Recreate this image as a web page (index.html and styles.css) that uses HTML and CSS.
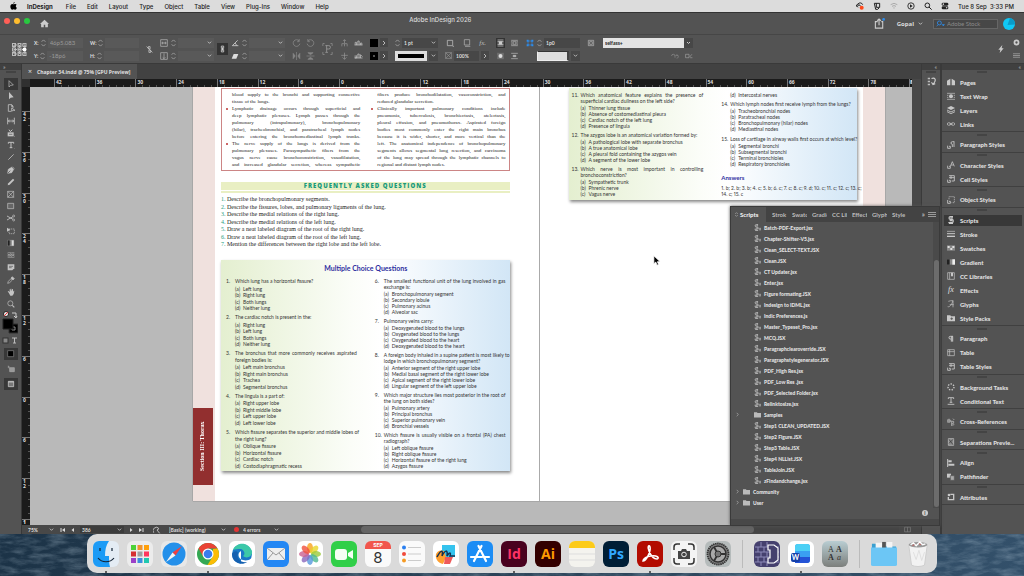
FILE: index.html
```html
<!DOCTYPE html>
<html lang="en">
<head>
  <meta charset="UTF-8">
  <meta name="viewport" content="width=device-width, initial-scale=1.0">
  <title>Adobe InDesign 2026</title>
  <link rel="stylesheet" href="styles.css">
</head>
<body>
  <!-- icon sprite -->
  <svg class="sprite" aria-hidden="true">
    <symbol id="script" viewBox="0 0 12 12"><path d="M7 1H4a2 2 0 0 0 0 4h1a2 2 0 0 1 0 4H1M4 3h3M3 7h3M2 11h5" fill="none" stroke="currentColor" stroke-width="1.6"/><path d="M8 7h1v4M10 7h1v4" fill="none" stroke="currentColor" stroke-width="1.2"/></symbol>
    <symbol id="folder" viewBox="0 0 12 12"><path d="M0 2h5l1 1.500h6V11H0z" fill="currentColor"/></symbol>
    <symbol id="chev" viewBox="0 0 12 12"><path d="M4 2l4 4-4 4" fill="none" stroke="currentColor" stroke-width="1.500"/></symbol>
    <symbol id="down" viewBox="0 0 12 12"><path d="M2 4l4 4 4-4" fill="none" stroke="currentColor" stroke-width="1.800"/></symbol>
    <symbol id="step" viewBox="0 0 8 12"><path d="M1 4l3-3 3 3M1 8l3 3 3-3" fill="none" stroke="currentColor" stroke-width="1.300"/></symbol>
    <symbol id="pstyle" viewBox="0 0 12 12"><path d="M11 1H8a2 2 0 0 0 0 4v4M10.500 1v8" fill="none" stroke="currentColor" stroke-width="1.300"/><path d="M1 7v4h4V8H3" fill="none" stroke="currentColor" stroke-width="1.300"/></symbol>
    <symbol id="cellstyle" viewBox="0 0 12 12"><path d="M3 1h8v8H7M3 4h8M6 1v5M1 7v4h4V8H3" fill="none" stroke="currentColor" stroke-width="1.300"/></symbol>
  </svg>

  <header class="menubar">
    <svg class="apple" viewBox="0 0 12 14"><path d="M8 0c0 2-1 3-2.500 3C5.500 1.500 6.500.5 8 0zM6 4c1 0 1.500-.7 3-.7 1 0 2 .6 2.500 1.400-2.200 1.300-1.800 4.300.4 5.200-.6 1.700-1.800 3.600-3 3.600-1 0-1.400-.6-2.600-.6s-1.700.6-2.600.6C2.200 13.500.5 10.500.5 7.700c0-2.800 1.700-4.300 3.300-4.300.9 0 1.500.6 2.200.6z"/></svg>
    <nav class="menus">
      <a href="#" class="appname">InDesign</a><a href="#">File</a><a href="#">Edit</a><a href="#">Layout</a><a href="#">Type</a><a href="#">Object</a><a href="#">Table</a><a href="#">View</a><a href="#">Plug-Ins</a><a href="#">Window</a><a href="#">Help</a>
    </nav>
    <div class="tray">
      <svg viewBox="0 0 12 12"><path d="M1 7a3 3 0 0 1 2-4 4 4 0 0 1 7 1M3 8a2 2 0 1 1 3-3l2 2" fill="none" stroke="#222" stroke-width="1.500"/><circle cx="8.500" cy="8.500" r="3" fill="#ff4a1c"/></svg>
      <svg viewBox="0 0 12 12"><path d="M2 2h8v6L7 11H4zM5 2v6h4" fill="none" stroke="#222" stroke-width="1.500"/></svg>
      <svg viewBox="0 0 12 12"><path d="M1 4a8 8 0 0 1 10 0M3 6.500a5 5 0 0 1 6 0M5 9a2 2 0 0 1 2 0" fill="none" stroke="#aaa" stroke-width="1.500"/></svg>
      <svg viewBox="0 0 12 12"><circle cx="6" cy="6" r="4.800" fill="none" stroke="#222" stroke-width="1.300"/><path d="M4.500 3.500L8.500 6l-4 2.500z" fill="#222"/></svg>
      <svg viewBox="0 0 12 12"><circle cx="5" cy="5" r="3.500" fill="none" stroke="#222" stroke-width="1.500"/><path d="M7.500 7.500l4 4" stroke="#222" stroke-width="1.500"/></svg>
      <svg viewBox="0 0 12 12"><rect x="1" y="1" width="10" height="4.500" rx="2" fill="#222"/><circle cx="3.500" cy="3.200" r="1.200" fill="#ddd"/><rect x="1" y="6.500" width="10" height="4.500" rx="2" fill="#222"/><circle cx="8.500" cy="8.700" r="1.200" fill="#ddd"/></svg>
      <time>Tue 8 Sep&nbsp; 3:33 PM</time>
    </div>
  </header>

  <main class="app">
    <div class="titlebar">
      <div class="lights"><i></i><i></i><i></i></div>
      <svg class="home" viewBox="0 0 12 12"><path d="M6 1L0 6.500h1.500V11H5V7.500h2V11h3.500V6.500H12z" fill="#ccc"/></svg>
      <h1>Adobe InDesign 2026</h1>
      <div class="account">
        <svg class="share" viewBox="0 0 12 12"><path d="M4 4H1.500v7h8V4H8M5.500 8V1M3.500 3l2-2 2 2" fill="none" stroke="#ccc" stroke-width="1.200"/><circle cx="10.500" cy="1.500" r="1.500" fill="#2d8ceb"/></svg>
        <button class="user">Gopal <svg viewBox="0 0 12 12"><use href="#down"/></svg></button>
        <label class="stock"><svg viewBox="0 0 16 12"><circle cx="6" cy="5" r="3.500" fill="none" stroke="#2d8ceb" stroke-width="1.500"/><path d="M4 8l-3 3M11 8h4l-2 2z" stroke="#2d8ceb" stroke-width="1.300" fill="#2d8ceb"/></svg><input type="text" placeholder="Adobe Stock" aria-label="Adobe Stock"></label>
        <svg class="avatar" viewBox="0 0 12 12"><circle cx="6" cy="6" r="6" fill="#10c8f5"/><path d="M7 0a6 6 0 0 1 5 6.500L4.500 7z" fill="#0b9bc8"/></svg>
      </div>
    </div>

    <div class="control">
      <svg class="proxy" viewBox="0 0 15 13"><g fill="none" stroke="#bbb" stroke-width="1"><path d="M2 2h11M2 6.500h11M2 11h11M2 2v9M7.500 2v9M13 2v9" stroke-dasharray="1 1"/><rect x=".5" y=".5" width="3" height="3"/><rect x="6" y=".5" width="3" height="3"/><rect x="11" y=".5" width="3" height="3"/><rect x=".5" y="5" width="3" height="3"/><rect x="6" y="5" width="3" height="3"/><rect x=".5" y="9.500" width="3" height="3"/><rect x="6" y="9.500" width="3" height="3"/><rect x="11" y="9.500" width="3" height="3"/></g><circle cx="12.500" cy="6.500" r="2" fill="#fff"/></svg>
      <div class="pair w49">
        <label class="field dim">X:<svg viewBox="0 0 8 12"><use href="#step"/></svg><input type="text" value="46p5.083"></label>
        <label class="field dim">Y:<svg viewBox="0 0 8 12"><use href="#step"/></svg><input type="text" value="-18p6"></label>
      </div>
      <div class="pair w49">
        <label class="field dim">W:<svg viewBox="0 0 8 12"><use href="#step"/></svg><input type="text"></label>
        <label class="field dim">H:<svg viewBox="0 0 8 12"><use href="#step"/></svg><input type="text"></label>
      </div>
      <svg class="ic7" viewBox="0 0 12 12"><path d="M4 1h3v4H4zM5 7h3v4H5zM1 1l10 10" fill="none" stroke="#bbb" stroke-width="1.500"/></svg>
      <div class="cluster">
        <div class="pair w54">
          <label class="field"><svg class="lead" viewBox="0 0 12 12"><path d="M1 1h10v10H1zM2 6h8M4 4v4M8 4v4" fill="none" stroke="#bbb"/></svg><svg viewBox="0 0 8 12"><use href="#step"/></svg><select aria-label="Scale X"><option></option></select></label>
          <label class="field"><svg class="lead" viewBox="0 0 12 12"><path d="M1 1h10v10H1zM6 2v8M4 8l2 2 2-2" fill="none" stroke="#bbb"/></svg><svg viewBox="0 0 8 12"><use href="#step"/></svg><select aria-label="Scale Y"><option></option></select></label>
        </div>
        <button class="lock" aria-label="Constrain"><svg viewBox="0 0 12 12"><path d="M4 1h4v4H4zM4 7h4v4H4zM6 3v6" fill="none" stroke="#ddd" stroke-width="1.300"/></svg></button>
        <div class="pair w54">
          <label class="field"><svg class="lead" viewBox="0 0 12 12"><path d="M10 2L2 10h9M6 6a5 5 0 0 1 2 4" fill="none" stroke="#ccc" stroke-width="1.300"/></svg><svg viewBox="0 0 8 12"><use href="#step"/></svg><select aria-label="Rotation"><option></option></select></label>
          <label class="field"><svg class="lead" viewBox="0 0 12 12"><path d="M4 3h7l-3 7H1z" fill="#ddd"/></svg><svg viewBox="0 0 8 12"><use href="#step"/></svg><select aria-label="Shear"><option></option></select></label>
        </div>
      </div>
      <div class="quad faint">
        <svg viewBox="0 0 12 12"><path d="M10 3a5 5 0 1 0 1 4M10 0v4H7" fill="none" stroke="currentColor" stroke-width="1.200"/></svg>
        <svg viewBox="0 0 12 12"><path d="M2 3a5 5 0 1 1-1 4M2 0v4h3" fill="none" stroke="currentColor" stroke-width="1.200"/></svg>
        <svg viewBox="0 0 12 12"><path d="M1 2v8l3-4zM11 2v8L8 6zM6 0v12" fill="currentColor" stroke="currentColor"/></svg>
        <svg viewBox="0 0 12 12"><path d="M2 1h8L6 4zM2 11h8L6 8zM0 6h12" fill="currentColor" stroke="currentColor"/></svg>
      </div>
      <svg class="pbox" viewBox="0 0 13 15"><path d="M1 4V1h2M10 1h2v3M1 11v3h2M10 14h2v-3" fill="none" stroke="#888"/><path d="M4 11.500h3M5.500 11V3.500H8a2 2 0 0 1 0 4H5.500M4 3.500h2" fill="none" stroke="#999"/></svg>
      <div class="quad faint">
        <svg viewBox="0 0 12 12"><path d="M6 1v5M2 7h8M2 7v4M6 7v4M10 7v4M4 3l2-2 2 2" fill="none" stroke="#999"/></svg>
        <svg viewBox="0 0 12 12"><path d="M1 9V5h2v4M5 9V3h2v6M9 9V6h2v3M0 9h12" fill="none" stroke="#ccc"/></svg>
        <svg viewBox="0 0 12 12"><path d="M6 1v10M1 5h10M3 8l3 3 3-3" fill="none" stroke="#999"/></svg>
        <svg viewBox="0 0 12 12"><path d="M1 5v4h2V5M5 9V3h2v6M9 9V4l3 3M0 9h12" fill="none" stroke="#ccc"/></svg>
      </div>
      <div class="pair w18">
        <div class="row"><span class="swatch"></span><button class="mini" aria-label="Fill"><svg viewBox="0 0 12 12"><use href="#chev"/></svg></button></div>
        <div class="row"><span class="swatch dot"></span><button class="mini" aria-label="Stroke"><svg viewBox="0 0 12 12"><use href="#chev"/></svg></button></div>
      </div>
      <div class="pair w43">
        <label class="field box"><svg viewBox="0 0 8 12"><use href="#step"/></svg><select aria-label="Stroke weight"><option>1 pt</option></select></label>
        <label class="field box"><span class="line"></span><select class="only" aria-label="Stroke style"><option></option></select></label>
      </div>
      <div class="pair w44">
        <div class="row spread3">
          <svg class="ic8" viewBox="0 0 12 12"><path d="M2 2h8v8H2z" fill="none" stroke="#bbb" stroke-width="1.200"/><path d="M10 11h2" stroke="#ccc"/></svg>
          <svg class="ic8" viewBox="0 0 12 12"><path d="M2 1h8v8H2zM3 11h8" fill="none" stroke="#aaa" stroke-width="1.200"/></svg>
          <em>fx.</em>
        </div>
        <div class="row"><svg class="ic7" viewBox="0 0 12 12"><path d="M1 1h10v10H1zM1 1l10 10M11 1L1 11" fill="none" stroke="#999"/></svg><input class="pct" type="text" value="100%" aria-label="Opacity"><button class="mini" aria-label="Opacity menu"><svg viewBox="0 0 12 12"><use href="#chev"/></svg></button></div>
      </div>
      <div class="quad wrapset">
        <svg class="on" viewBox="0 0 12 12"><path d="M2 2h8M2 4h8M2 6h8M2 8h8M2 10h8" stroke="#ccc"/><path d="M4 4h4v4H4z" fill="#ccc"/></svg>
        <svg viewBox="0 0 12 12"><path d="M1 2h10M1 10h10M1 4h2M1 6h2M1 8h2M9 4h2M9 6h2M9 8h2M4 4h4v4H4z" stroke="#bbb" fill="none"/></svg>
        <svg viewBox="0 0 12 12"><path d="M1 2h10M1 4h10M1 6h10M1 8h10M1 10h10" stroke="#888"/><circle cx="6" cy="6" r="3" fill="#ddd"/></svg>
        <svg viewBox="0 0 12 12"><path d="M1 2h10M1 10h10M4 5h4v2H4z" stroke="#bbb" fill="#bbb"/></svg>
      </div>
      <div class="pair w54">
        <label class="field box"><svg class="lead" viewBox="0 0 12 12"><path d="M3 3h6v6H3z" fill="none" stroke="#2d8ceb"/><path d="M1 1h3v3H1zM8 1h3v3H8zM1 8h3v3H1zM8 8h3v3H8z" fill="#2d8ceb"/></svg><svg viewBox="0 0 8 12"><use href="#step"/></svg><input type="text" value="1p0" aria-label="Corner size"></label>
        <label class="field box indent"><span class="corner"></span><select class="only" aria-label="Corner shape"><option></option></select></label>
      </div>
      <div class="pair w106">
        <label class="field box"><svg class="ic8" viewBox="0 0 12 12"><path d="M2 2h8v8H2zM4 4h4v4H4z" fill="none" stroke="#bbb"/></svg><select class="style" aria-label="Object style"><option>selfass+</option></select></label>
        <div class="row end"><svg class="ic8" viewBox="0 0 14 12"><path d="M1 6a3 3 0 0 1 6 0v3M8 5h4l-2-2M12 5c2 2 0 5-2 5" fill="none" stroke="#999"/></svg><svg class="ic8" viewBox="0 0 14 12"><path d="M1 3h6v6H1zM8 8l4-5M9 9h4" fill="none" stroke="#aaa"/></svg></div>
      </div>
      <div class="ctlend">
        <svg class="ic8" viewBox="0 0 12 12"><path d="M8 0L2 7h3l-1 5 6-7H7z" fill="#ccc"/></svg>
        <div class="pair">
          <svg class="ic7" viewBox="0 0 12 12"><circle cx="6" cy="6" r="3.500" fill="none" stroke="#ccc" stroke-width="3" /></svg>
          <svg class="ic7" viewBox="0 0 12 12"><path d="M0 3h12M0 6h12M0 9h12" stroke="#bbb"/></svg>
        </div>
      </div>
    </div>

    <div class="work">
      <aside class="tools">
        <div class="dockhead left">»</div>
        <div class="grip"></div>
        <div class="toolset">
          <button class="on" aria-label="Selection"><svg viewBox="0 0 12 12"><path d="M3 1v9.500L5.500 8 9.500 7.500z" fill="none" stroke="currentColor"/></svg></button>
          <button aria-label="Direct Selection"><svg viewBox="0 0 12 12"><path d="M3 0v11L5.500 8.500 10 8z" fill="currentColor"/></svg></button>
          <button aria-label="Page"><svg viewBox="0 0 12 12"><path d="M2 1h5l2 2v3M2 1v10h4M7 1v3h2M7 6v5l2-1.500h3z" fill="none" stroke="currentColor" stroke-width="1.200"/></svg></button>
          <button aria-label="Gap"><svg viewBox="0 0 12 12"><path d="M1 1v10M11 1v10M2 6h8M4 4L2 6l2 2M8 4l2 2-2 2" fill="none" stroke="currentColor" stroke-width="1.300"/></svg></button>
          <button aria-label="Content Collector"><svg viewBox="0 0 12 12"><path d="M1 5v6h9V5z" fill="currentColor"/><path d="M3 1l2 3 3-3" fill="none" stroke="currentColor" stroke-width="1.500"/><path d="M3 8h5" stroke="#555"/><path d="M11 11h1" stroke="currentColor"/></svg></button>
          <button aria-label="Type"><svg viewBox="0 0 12 12"><path d="M2 4V2h8v2M6 2v8M4 10h4" fill="none" stroke="currentColor" stroke-width="1.500"/><path d="M11 12h1" stroke="currentColor"/></svg></button>
          <button aria-label="Line"><svg viewBox="0 0 12 12"><path d="M2 10l8-8" stroke="currentColor" stroke-width="1.200"/></svg></button>
          <button aria-label="Pen"><svg viewBox="0 0 12 12"><path d="M1 11l1-6 5-3 3 3-3 5zM8 1l3 3" fill="currentColor" stroke="currentColor"/><path d="M1 11l4-4" stroke="#444"/></svg></button>
          <button aria-label="Pencil"><svg viewBox="0 0 12 12"><path d="M1 11l1-3 7-7 2 2-7 7z" fill="currentColor"/></svg></button>
          <button aria-label="Rectangle Frame"><svg viewBox="0 0 12 12"><path d="M1 2h9v9H1zM1 2l9 9M10 2l-9 9" fill="none" stroke="currentColor"/></svg></button>
          <button aria-label="Rectangle"><svg viewBox="0 0 12 12"><path d="M1 2h9v8H1z" fill="#666" stroke="currentColor"/></svg></button>
          <button aria-label="Scissors"><svg viewBox="0 0 12 12"><path d="M0 3l9 5M0 9l9-5" stroke="currentColor" stroke-width="1.300"/><circle cx="10" cy="3" r="1.500" fill="none" stroke="currentColor"/><circle cx="10" cy="9" r="1.500" fill="none" stroke="currentColor"/></svg></button>
          <button aria-label="Free Transform"><svg viewBox="0 0 12 12"><path d="M0 1v6l5-3z" fill="currentColor"/><path d="M3 3h8v7H3z" fill="none" stroke="currentColor" stroke-dasharray="2 1"/></svg></button>
          <button aria-label="Gradient Swatch"><svg viewBox="0 0 12 12"><path d="M1 2h9v8H1z" fill="#777" stroke="#999"/><path d="M1 2h3v8H1z" fill="#222"/><path d="M7 2h3v8H7z" fill="#ddd"/></svg></button>
          <button aria-label="Gradient Feather"><svg viewBox="0 0 12 12"><path d="M1 2h10v8H1z" fill="#999"/><path d="M1 5l2-2 2 2 2-2 2 2 2-2M1 9l2-2 2 2 2-2 2 2 2-2" fill="none" stroke="#444"/></svg></button>
          <button aria-label="Note"><svg viewBox="0 0 12 12"><path d="M1 2h10v6l-3 3H1z" fill="currentColor"/><path d="M3 5h6M3 7h4" stroke="#555"/></svg></button>
          <button aria-label="Eyedropper"><svg viewBox="0 0 12 12"><path d="M1 11l1-3 4-4 2 2-4 4z" fill="none" stroke="currentColor"/><path d="M6 3l2-2 3 3-2 2z" fill="currentColor" stroke="currentColor"/></svg></button>
          <button aria-label="Hand"><svg viewBox="0 0 12 12"><path d="M3 8L1 5l1-.5L4 6V2h1v3l.5-4h1V5L8 1.500h1V6l1-2h1L10 9l-2 2.500H5z" fill="currentColor"/></svg></button>
          <button aria-label="Zoom"><svg viewBox="0 0 12 12"><circle cx="5" cy="5" r="3.800" fill="none" stroke="currentColor"/><path d="M8 8l3 3" stroke="currentColor" stroke-width="1.600"/></svg></button>
        </div>
        <svg class="fillstroke" viewBox="0 0 16 36">
          <circle cx="4" cy="4" r="2.500" fill="#eee" stroke="#222"/><path d="M2 6l4-4" stroke="#d33"/><path d="M10 3h4v4M12 6l2 2 1-2" fill="none" stroke="#ccc"/>
          <path d="M7 14h9v9H7z" fill="#000" stroke="#333"/><path d="M10 17h3v3h-3z" fill="none" stroke="#888"/><path d="M1 9h10v10H1z" fill="#000" stroke="#222"/>
          <rect x="1" y="28" width="5" height="5" fill="#888" stroke="#333"/><path d="M10 28h5M12.500 28v5M11 33h3" stroke="#bbb"/>
        </svg>
        <div class="toolset last">
          <button class="on" aria-label="Apply Color"><svg viewBox="0 0 12 12"><path d="M1 1h9v9H1z" fill="#000" stroke="#888"/></svg></button>
          <button aria-label="View Options"><svg viewBox="0 0 12 12"><path d="M4 4h7v6H4zM1 3h3M2 1l1 4" fill="#999" stroke="#aaa"/></svg></button>
          <button class="on" aria-label="Screen Mode"><svg viewBox="0 0 12 12"><path d="M2 2h8v8H2z" fill="#777" stroke="#ddd"/><path d="M2 3h8" stroke="#ddd"/></svg></button>
        </div>
      </aside>

      <section class="doc">
        <div class="tabs"><div class="tab"><button aria-label="Close">×</button>Chapter 34.indd @ 75% [GPU Preview]</div></div>
        <div class="hruler">
          <div class="lead"></div>
          <span>42</span><span>36</span><span>30</span><span>24</span><span>18</span><span>12</span><span>6</span><span>0</span><span>6</span><span>12</span><span>18</span><span>24</span><span>30</span><span>36</span><span>42</span><span>48</span><span>54</span><span>60</span><span>66</span><span>72</span><span>78</span><b>8</b>
        </div>
        <div class="body">
          <div class="vruler">
            <div class="lead"></div>
            <span>42</span><span>36</span><span>30</span><span>24</span><span>18</span><span>12</span><span>6</span><span>0</span><span>6</span><span>12</span><b>1</b>
          </div>
          <div class="canvas">
            <div class="spread">
              <article class="page">
                <div class="edge"><div class="section">Section III: Thorax</div></div>
                <div class="content">
                  <div class="summary">
                    <div>
                      <p><span class="j">blood supply to the bronchi and supporting connective</span>tissue of the lungs.</p>
                      <p class="bul"><span class="j">Lymphatic drainage occurs through superficial and</span><span class="j">deep lymphatic plexuses. Lymph passes through the</span><span class="j">pulmonary (intrapulmonary), bronchopulmonary</span><span class="j">(hilar), tracheobronchial, and paratracheal lymph nodes</span><span class="j">before entering the bronchomediastinal lymph trunks.</span></p>
                      <p class="bul"><span class="j">The nerve supply of the lungs is derived from the</span><span class="j">pulmonary plexuses. Parasympathetic fibers from the</span><span class="j">vagus nerve cause bronchoconstriction, vasodilatation,</span><span class="j">and increased glandular secretion, whereas sympathetic</span></p>
                    </div>
                    <div>
                      <p><span class="j">fibers produce bronchodilatation, vasoconstriction, and</span>reduced glandular secretion.</p>
                      <p class="bul"><span class="j">Clinically important pulmonary conditions include</span><span class="j">pneumonia, tuberculosis, bronchiectasis, atelectasis,</span><span class="j">pleural effusion, and pneumothorax. Aspirated foreign</span><span class="j">bodies most commonly enter the right main bronchus</span><span class="j">because it is wider, shorter, and more vertical than the</span><span class="j">left. The anatomical independence of bronchopulmonary</span><span class="j">segments allows segmental lung resection, and carcinoma</span><span class="j">of the lung may spread through the lymphatic channels to</span>regional and distant lymph nodes.</p>
                    </div>
                  </div>
                  <h2 class="faqhead">FREQUENTLY ASKED QUESTIONS</h2>
                  <div class="faq">
                    <p><b>1.</b> Describe the bronchopulmonary segments.</p>
                    <p><b>2.</b> Describe the fissures, lobes, and pulmonary ligaments of the lung.</p>
                    <p><b>3.</b> Describe the medial relations of the right lung.</p>
                    <p><b>4.</b> Describe the medial relations of the left lung.</p>
                    <p><b>5.</b> Draw a neat labeled diagram of the root of the right lung.</p>
                    <p><b>6.</b> Draw a neat labeled diagram of the root of the left lung.</p>
                    <p><b>7.</b> Mention the differences between the right lobe and the left lobe.</p>
                  </div>
                  <section class="mcq">
                    <h2>Multiple Choice Questions</h2>
                    <div class="cols">
                      <div class="col loose">
                        <div class="q"><b>1.</b><div><p>Which lung has a horizontal fissure?</p><ul><li><i>(a)</i>Left lung</li><li><i>(b)</i>Right lung</li><li><i>(c)</i>Both lungs</li><li><i>(d)</i>Neither lung</li></ul></div></div>
                        <div class="q"><b>2.</b><div><p>The cardiac notch is present in the:</p><ul><li><i>(a)</i>Right lung</li><li><i>(b)</i>Left lung</li><li><i>(c)</i>Both lungs</li><li><i>(d)</i>Neither lung</li></ul></div></div>
                        <div class="q"><b>3.</b><div><p><span class="j">The bronchus that more commonly receives aspirated</span>foreign bodies is:</p><ul><li><i>(a)</i>Left main bronchus</li><li><i>(b)</i>Right main bronchus</li><li><i>(c)</i>Trachea</li><li><i>(d)</i>Segmental bronchus</li></ul></div></div>
                        <div class="q"><b>4.</b><div><p>The lingula is a part of:</p><ul><li><i>(a)</i>Right upper lobe</li><li><i>(b)</i>Right middle lobe</li><li><i>(c)</i>Left upper lobe</li><li><i>(d)</i>Left lower lobe</li></ul></div></div>
                        <div class="q"><b>5.</b><div><p><span class="j">Which fissure separates the superior and middle lobes of</span>the right lung?</p><ul><li><i>(a)</i>Oblique fissure</li><li><i>(b)</i>Horizontal fissure</li><li><i>(c)</i>Cardiac notch</li><li><i>(d)</i>Costodiaphragmatic recess</li></ul></div></div>
                      </div>
                      <div class="col">
                        <div class="q"><b>6.</b><div><p><span class="j">The smallest functional unit of the lung involved in gas</span>exchange is:</p><ul><li><i>(a)</i>Bronchopulmonary segment</li><li><i>(b)</i>Secondary lobule</li><li><i>(c)</i>Pulmonary acinus</li><li><i>(d)</i>Alveolar sac</li></ul></div></div>
                        <div class="q"><b>7.</b><div><p>Pulmonary veins carry:</p><ul><li><i>(a)</i>Deoxygenated blood to the lungs</li><li><i>(b)</i>Oxygenated blood to the lungs</li><li><i>(c)</i>Oxygenated blood to the heart</li><li><i>(d)</i>Deoxygenated blood to the heart</li></ul></div></div>
                        <div class="q"><b>8.</b><div><p><span class="j">A foreign body inhaled in a supine patient is most likely to</span>lodge in which bronchopulmonary segment?</p><ul><li><i>(a)</i>Anterior segment of the right upper lobe</li><li><i>(b)</i>Medial basal segment of the right lower lobe</li><li><i>(c)</i>Apical segment of the right lower lobe</li><li><i>(d)</i>Lingular segment of the left upper lobe</li></ul></div></div>
                        <div class="q"><b>9.</b><div><p><span class="j">Which major structure lies most posterior in the root of</span>the lung on both sides?</p><ul><li><i>(a)</i>Pulmonary artery</li><li><i>(b)</i>Principal bronchus</li><li><i>(c)</i>Superior pulmonary vein</li><li><i>(d)</i>Bronchial vessels</li></ul></div></div>
                        <div class="q"><b>10.</b><div><p><span class="j">Which fissure is usually visible on a frontal (PA) chest</span>radiograph?</p><ul><li><i>(a)</i>Left oblique fissure</li><li><i>(b)</i>Right oblique fissure</li><li><i>(c)</i>Horizontal fissure of the right lung</li><li><i>(d)</i>Azygos fissure</li></ul></div></div>
                      </div>
                    </div>
                  </section>
                </div>
              </article>
              <article class="page right">
                <div class="content">
                  <section class="mcq cont">
                    <div class="cols">
                      <div class="col">
                        <div class="q"><b>11.</b><div><p><span class="j">Which anatomical feature explains the presence of</span>superficial cardiac dullness on the left side?</p><ul><li><i>(a)</i>Thinner lung tissue</li><li><i>(b)</i>Absence of costomediastinal pleura</li><li><i>(c)</i>Cardiac notch of the left lung</li><li><i>(d)</i>Presence of lingula</li></ul></div></div>
                        <div class="q"><b>12.</b><div><p>The azygos lobe is an anatomical variation formed by:</p><ul><li><i>(a)</i>A pathological lobe with separate bronchus</li><li><i>(b)</i>A true anatomical lobe</li><li><i>(c)</i>A pleural fold containing the azygos vein</li><li><i>(d)</i>A segment of the lower lobe</li></ul></div></div>
                        <div class="q"><b>13.</b><div><p><span class="j">Which nerve is most important in controlling</span>bronchoconstriction?</p><ul><li><i>(a)</i>Sympathetic trunk</li><li><i>(b)</i>Phrenic nerve</li><li><i>(c)</i>Vagus nerve</li></ul></div></div>
                      </div>
                      <div class="col">
                        <div class="q"><b></b><div><ul><li><i>(d)</i>Intercostal nerves</li></ul></div></div>
                        <div class="q"><b>14.</b><div><p>Which lymph nodes first receive lymph from the lungs?</p><ul><li><i>(a)</i>Tracheobronchial nodes</li><li><i>(b)</i>Paratracheal nodes</li><li><i>(c)</i>Bronchopulmonary (hilar) nodes</li><li><i>(d)</i>Mediastinal nodes</li></ul></div></div>
                        <div class="q"><b>15.</b><div><p>Loss of cartilage in airway walls first occurs at which level?</p><ul><li><i>(a)</i>Segmental bronchi</li><li><i>(b)</i>Subsegmental bronchi</li><li><i>(c)</i>Terminal bronchioles</li><li><i>(d)</i>Respiratory bronchioles</li></ul></div></div>
                        <div class="answers"><h3>Answers</h3><p><span class="j">1. b; 2. b; 3. b; 4. c; 5. b; 6. c; 7. c; 8. c; 9. d; 10. c; 11. c; 12. c; 13. c;</span>14. c; 15. c</p></div>
                      </div>
                    </div>
                  </section>
                </div>
                <div class="edge"></div>
              </article>
            </div>
            <svg class="cursor" viewBox="0 0 10 14"><path d="M1 1v10l2.500-2 1.500 4 2-1-1.500-3.500H9z" fill="#000" stroke="#fff"/></svg>
          </div>
        </div>
        <footer class="status">
          <select class="zoom" aria-label="Zoom"><option>75%</option></select>
          <button aria-label="First page"><svg viewBox="0 0 12 12"><path d="M2 2v8" stroke="currentColor" stroke-width="2"/><path d="M10 2v8L4 6z" fill="currentColor"/></svg></button>
          <button aria-label="Previous page"><svg viewBox="0 0 12 12"><path d="M8 2v8L3 6z" fill="currentColor"/></svg></button>
          <select class="pageno" aria-label="Page"><option>386</option></select>
          <button aria-label="Next page"><svg viewBox="0 0 12 12"><path d="M4 2v8l5-4z" fill="currentColor"/></svg></button>
          <button aria-label="Last page"><svg viewBox="0 0 12 12"><path d="M10 2v8" stroke="currentColor" stroke-width="2"/><path d="M2 2v8l6-4z" fill="currentColor"/></svg></button>
          <svg class="ic8" viewBox="0 0 12 12"><path d="M1 10a5 5 0 1 1 8-6L6 6l4 5" fill="none" stroke="#bbb" stroke-width="1.500"/></svg>
          <select class="profile" aria-label="Preflight profile"><option>[Basic] (working)</option></select>
          <span class="err"></span>
          <select class="errors" aria-label="Errors"><option>4 errors</option></select>
          <div class="scroll"><div></div></div>
          <svg class="split" viewBox="0 0 12 12"><path d="M1 2h10v8H1zM6 2v8" fill="none" stroke="#888"/></svg>
        </footer>
      </section>

      <aside class="strip">
        <div class="dockhead">«</div>
        <div class="grip"></div>
        <svg viewBox="0 0 12 12"><path d="M1 1h3v2H1zM1 5h3v2H1zM1 9h3v2H1z" fill="#bbb"/><path d="M6 2c5-2 6 2 4 5l-2 3M6 7l2 3 3-1" fill="none" stroke="#ccc" stroke-width="1.500"/></svg>
      </aside>

      <aside class="panels">
        <div class="dockhead">«</div>
        <div class="groups">
          <div class="group">
            <button><svg viewBox="0 0 12 12"><path d="M0 4l5-3v10H0zM12 4L7 1v10h5z" fill="currentColor"/></svg>Pages</button>
            <button><svg viewBox="0 0 12 12"><path d="M0 2h12M0 5h2M10 5h2M0 8h2M10 8h2M0 11h12" stroke="currentColor"/><circle cx="6" cy="6.500" r="3" fill="currentColor"/></svg>Text Wrap</button>
            <button><svg viewBox="0 0 12 12"><path d="M6 0l6 3-6 3-6-3z" fill="currentColor"/><path d="M0 6l6 3 6-3M0 8.500l6 3 6-3" fill="none" stroke="currentColor" stroke-width="1.300"/></svg>Layers</button>
            <button><svg viewBox="0 0 12 12"><rect x="0.500" y="4" width="5" height="4" rx="2" fill="none" stroke="currentColor"/><rect x="6.500" y="4" width="5" height="4" rx="2" fill="none" stroke="currentColor"/><path d="M3 6h6" stroke="currentColor"/></svg>Links</button>
          </div>
          <div class="group">
            <button><svg viewBox="0 0 12 12"><use href="#pstyle"/></svg>Paragraph Styles</button>
          </div>
          <div class="group">
            <button><svg viewBox="0 0 12 12"><path d="M5 8l3-7 3 7M6 6h4M1 7v4h4V8H3" fill="none" stroke="currentColor" stroke-width="1.200"/></svg>Character Styles</button>
            <button><svg viewBox="0 0 12 12"><use href="#cellstyle"/></svg>Cell Styles</button>
          </div>
          <div class="group">
            <button><svg viewBox="0 0 12 12"><path d="M3 5V1h8v9H7" fill="none" stroke="currentColor" stroke-dasharray="2 1"/><path d="M1 6v5h4V8H3" fill="none" stroke="currentColor" stroke-width="1.300"/></svg>Object Styles</button>
          </div>
          <div class="group">
            <button class="on"><svg viewBox="0 0 12 12"><path d="M9 1H5a2 2 0 0 0 0 4h2a2 2 0 0 1 0 5H2M5 3h4M4 7h4M3 11h6" fill="none" stroke="currentColor" stroke-width="1.700"/></svg>Scripts</button>
            <button><svg viewBox="0 0 12 12"><path d="M0 2h12" stroke="currentColor"/><path d="M0 5.500h12" stroke="currentColor" stroke-width="1.500"/><path d="M0 9.500h12" stroke="currentColor" stroke-width="2"/></svg>Stroke</button>
            <button><svg viewBox="0 0 12 12"><path d="M0 2h12v8H0z" fill="#888"/><path d="M1 3h3v3H1zM8 3h3v3H8zM5 6h3v3H5z" fill="#ddd"/></svg>Swatches</button>
            <button><svg viewBox="0 0 12 12"><path d="M0 2h12v8H0z" fill="#888"/><path d="M0 2h4v8H0z" fill="#222"/><path d="M8 2h4v8H8z" fill="#eee"/></svg>Gradient</button>
            <button><svg viewBox="0 0 12 12"><path d="M1 1h10v10H1zM4 1v10" fill="none" stroke="currentColor"/><path d="M6 1h3v6L7.500 5.500 6 7z" fill="currentColor"/></svg>CC Libraries</button>
            <button><em>fx</em>Effects</button>
            <button><svg viewBox="0 0 12 12"><path d="M1 10c3 1 6-3 8-9v10M4 7h6M2 2c2-1 5-1 7-1" fill="none" stroke="currentColor"/></svg>Glyphs</button>
            <button><svg viewBox="0 0 12 12"><use href="#folder"/><path d="M7 5v4M5 7h4" stroke="#444"/></svg>Style Packs</button>
          </div>
          <div class="group">
            <button><svg viewBox="0 0 12 12"><path d="M9 2H5a2 2 0 0 0 0 4h1M6.500 2v8M8.500 2v8" fill="none" stroke="currentColor" stroke-width="1.500"/></svg>Paragraph</button>
            <button><svg viewBox="0 0 12 12"><path d="M1 1h10v9H1zM1 4h10M4 1v9" fill="none" stroke="currentColor"/></svg>Table</button>
            <button><svg viewBox="0 0 12 12"><use href="#cellstyle"/></svg>Table Styles</button>
          </div>
          <div class="group">
            <button><svg viewBox="0 0 12 12"><circle cx="6" cy="6" r="4.500" fill="none" stroke="currentColor" stroke-width="2" stroke-dasharray="2 2"/></svg>Background Tasks</button>
            <button><svg viewBox="0 0 12 12"><path d="M2 3V1h8v2M6 1v7M4 8h4M1 11h10" fill="none" stroke="currentColor" stroke-width="1.300"/></svg>Conditional Text</button>
          </div>
          <div class="group">
            <button><svg viewBox="0 0 12 12"><path d="M0 3h5v3H0zM3 1v6M7 4v7M7 5h3v3H7M6 11l5-1M9 1l2 2" fill="none" stroke="currentColor"/></svg>Cross-References</button>
          </div>
          <div class="group">
            <button><svg viewBox="0 0 12 12"><path d="M2 1h8v10H2z" fill="#888" stroke="currentColor"/><path d="M3 2l6 8M9 2L3 8" stroke="#333"/></svg>Separations Previe...</button>
          </div>
          <div class="group">
            <button><svg viewBox="0 0 12 12"><path d="M1 0v12" stroke="currentColor" stroke-width="1.500"/><path d="M2 2h5v3H2zM2 7h9v3H2z" fill="currentColor"/></svg>Align</button>
            <button><svg viewBox="0 0 12 12"><path d="M0 1h6v6H0z" fill="currentColor"/><path d="M5 4h6v7H5z" fill="#aaa" stroke="#555"/></svg>Pathfinder</button>
          </div>
          <div class="group">
            <button><svg viewBox="0 0 12 12"><path d="M5 2h5v8H2V6" fill="none" stroke="currentColor" stroke-width="2"/><circle cx="3" cy="3" r="2" fill="currentColor"/></svg>Attributes</button>
          </div>
        </div>
      </aside>

      <!-- floating scripts panel -->
      <div class="scripts">
        <div class="ptabs">
          <button class="on"><svg viewBox="0 0 8 12"><use href="#step"/></svg>Scripts</button><button>Strok</button><button>Swatc</button><button>Gradie</button><button>CC Lib</button><button>Effect</button><button>Glyphs</button><button>Style</button><span class="more">»</span><span class="bars"></span>
        </div>
        <div class="plist">
          <ul>
            <li><svg><use href="#script"/></svg>Batch-PDF-Export.jsx</li>
            <li><svg><use href="#script"/></svg>Chapter-Shifter-V5.jsx</li>
            <li><svg><use href="#script"/></svg>Clean_SELECT-TEXT.JSX</li>
            <li><svg><use href="#script"/></svg>Clean.JSX</li>
            <li><svg><use href="#script"/></svg>CT Updater.jsx</li>
            <li><svg><use href="#script"/></svg>Enter.jsx</li>
            <li><svg><use href="#script"/></svg>Figure formating.JSX</li>
            <li><svg><use href="#script"/></svg>Indesign to IDML.jsx</li>
            <li><svg><use href="#script"/></svg>Indic Preferences.js</li>
            <li><svg><use href="#script"/></svg>Master_Typeset_Pro.jsx</li>
            <li><svg><use href="#script"/></svg>MCQ.JSX</li>
            <li><svg><use href="#script"/></svg>Paragraphclearoverride.JSX</li>
            <li><svg><use href="#script"/></svg>Paragraphstylegenerator.JSX</li>
            <li><svg><use href="#script"/></svg>PDF_High Res.jsx</li>
            <li><svg><use href="#script"/></svg>PDF_Low Res .jsx</li>
            <li><svg><use href="#script"/></svg>PDF_Selected Folder.jsx</li>
            <li><svg><use href="#script"/></svg>Relinktosize.jsx</li>
            <li class="dir"><svg class="tw"><use href="#chev"/></svg><svg><use href="#folder"/></svg>Samples</li>
            <li><svg><use href="#script"/></svg>Step1 CLEAN_UPDATED.JSX</li>
            <li><svg><use href="#script"/></svg>Step2 Figure.JSX</li>
            <li><svg><use href="#script"/></svg>Step3 Table.JSX</li>
            <li><svg><use href="#script"/></svg>Step4 NLList.JSX</li>
            <li><svg><use href="#script"/></svg>TableJoin.JSX</li>
            <li><svg><use href="#script"/></svg>zFindandchange.jsx</li>
            <li class="dir top"><svg class="tw"><use href="#chev"/></svg><svg><use href="#folder"/></svg>Community</li>
            <li class="dir top"><svg class="tw"><use href="#chev"/></svg><svg><use href="#folder"/></svg>User</li>
          </ul>
          <div class="vscroll"><div></div></div>
        </div>
        <div class="pfoot"><span>i</span></div>
      </div>
    </div>
  </main>

  <div class="desktop">
    <svg class="sea" preserveAspectRatio="none" aria-hidden="true">
      <filter id="waves"><feTurbulence type="fractalNoise" baseFrequency="0.06 0.2" numOctaves="4" seed="4"/><feColorMatrix values="0 0 0 0 .55  0 0 0 0 .68  0 0 0 0 .78  1.800 0 0 0 -.65"/></filter>
      <rect width="100%" height="100%" filter="url(#waves)"/>
    </svg>
    <nav class="dock">
      <a href="#" class="run" aria-label="Finder"><svg viewBox="0 0 26 26"><rect width="26" height="26" rx="6" fill="#e4ecf4"/><path d="M6 0h10c-3 4-4 9-4 15h4c0 4 0 8 1 11H6a6 6 0 0 1-6-6V6a6 6 0 0 1 6-6z" fill="#1c9bf6"/><path d="M7 7v3M19 7v3M5 17c4 5 12 5 16 0" fill="none" stroke="#123" stroke-width="1.200"/></svg></a>
      <a href="#" aria-label="Launchpad"><svg viewBox="0 0 26 26"><rect width="26" height="26" rx="6" fill="#ececec"/><path d="M4 4h5v5H4z" fill="#4cd137"/><path d="M10.500 4h5v5h-5z" fill="#f0932b"/><path d="M17 4h5v5h-5z" fill="#ff9f0a"/><path d="M4 10.500h5v5H4z" fill="#d63031"/><path d="M10.500 10.500h5v5h-5z" fill="#a0a0a0"/><path d="M17 10.500h5v5h-5z" fill="#ff375f"/><path d="M4 17h5v5H4z" fill="#9b40c8"/><path d="M10.500 17h5v5h-5z" fill="#3a8dde"/><path d="M17 17h5v5h-5z" fill="#20c8b0"/></svg></a>
      <a href="#" aria-label="Safari"><svg viewBox="0 0 26 26"><rect width="26" height="26" rx="6" fill="#e8e8e8"/><circle cx="13" cy="13" r="11.500" fill="#2490ea"/><path d="M21 5l-6.500 9.500L11.500 11.500z" fill="#f04040"/><path d="M5 21l6.500-9.500 3 3z" fill="#f4f4f4"/></svg></a>
      <a href="#" class="run" aria-label="Chrome"><svg viewBox="0 0 26 26"><rect width="26" height="26" rx="6" fill="#fff"/><circle cx="13" cy="13" r="11" fill="#34a853"/><path d="M3.500 7.500A11 11 0 0 1 22.500 7.500H13L8.300 15.700z" fill="#ea4335"/><path d="M22.500 7.500A11 11 0 0 1 12.500 24l5.200-8.300L18 8z" fill="#fbbc05"/><circle cx="13" cy="13" r="5.500" fill="#fff"/><circle cx="13" cy="13" r="4.300" fill="#3b7ded"/></svg></a>
      <a href="#" aria-label="Edge"><svg viewBox="0 0 26 26"><rect width="26" height="26" rx="6" fill="#fff"/><circle cx="13" cy="13" r="10" fill="#1a78c8"/><path d="M4 9C7 1 19 0 23 10c1 6-6 8-9 5 3-2 1-6-2-7-3 0-6 0-8 1z" fill="#3cc8a8"/><path d="M12 10c-4 2-3 8 2 9 3 1 6 0 8-1l3 3-3 4H12z" fill="#fff"/><path d="M9 12c-2 6 3 10 9 9-5 4-15 1-15-8 1-3 5-4 6-1z" fill="#1460b0"/></svg></a>
      <a href="#" aria-label="Mail"><svg viewBox="0 0 26 26"><rect width="26" height="26" rx="6" fill="#2387f4"/><path d="M4 7h18v12H4z" fill="#eee"/><path d="M4 7l9 7 9-7M4 19l6-7M22 19l-6-7" fill="none" stroke="#999"/></svg></a>
      <a href="#" aria-label="Photos"><svg viewBox="0 0 26 26"><rect width="26" height="26" rx="6" fill="#fff"/><g fill-opacity=".8"><ellipse cx="13" cy="7" rx="3" ry="5" fill="#f7a21b"/><ellipse cx="13" cy="7" rx="3" ry="5" fill="#e8d62a" transform="rotate(45 13 13)"/><ellipse cx="13" cy="7" rx="3" ry="5" fill="#9bcb3c" transform="rotate(90 13 13)"/><ellipse cx="13" cy="7" rx="3" ry="5" fill="#4bb88f" transform="rotate(135 13 13)"/><ellipse cx="13" cy="7" rx="3" ry="5" fill="#5599dd" transform="rotate(180 13 13)"/><ellipse cx="13" cy="7" rx="3" ry="5" fill="#8a68bd" transform="rotate(225 13 13)"/><ellipse cx="13" cy="7" rx="3" ry="5" fill="#cc6090" transform="rotate(270 13 13)"/><ellipse cx="13" cy="7" rx="3" ry="5" fill="#f0503c" transform="rotate(315 13 13)"/></g></svg></a>
      <a href="#" aria-label="FaceTime"><svg viewBox="0 0 26 26"><rect width="26" height="26" rx="6" fill="#30cf48"/><rect x="4" y="8" width="12" height="11" rx="3" fill="#f4fff4"/><path d="M17 12l5-3v9l-5-3z" fill="#f4fff4"/></svg></a>
      <a href="#" class="cal" aria-label="Calendar"><b>SEP</b><span>8</span></a>
      <a href="#" aria-label="Reminders"><svg viewBox="0 0 26 26"><rect width="26" height="26" rx="6" fill="#fafafa"/><circle cx="5" cy="6.500" r="2" fill="#2a7ff0"/><circle cx="5" cy="13" r="2" fill="#f04a3a"/><circle cx="5" cy="19.500" r="2" fill="#f59a23"/><path d="M9 6.500h13M9 13h13M9 19.500h13" stroke="#ccc"/></svg></a>
      <a href="#" aria-label="Freeform"><svg viewBox="0 0 26 26"><rect width="26" height="26" rx="6" fill="#fff"/><path d="M9 4h13v12H9z" fill="#35c3ee"/><path d="M3 13a6 6 0 0 1 8-3l2 6-3 7c-5-1-8-5-7-10z" fill="#ff9f2e"/><path d="M12 16h8l-3 7h-6z" fill="#ef5a5a"/><path d="M4 16c5-9 6-6 5-1 3-6 6-7 5 0 3-5 4-3 3 0h5" fill="none" stroke="#15314f" stroke-width="1.500"/></svg></a>
      <a href="#" aria-label="App Store"><svg viewBox="0 0 26 26"><rect width="26" height="26" rx="6" fill="#1c8df5"/><path d="M14.500 5L7 20M11.500 5L19 20M4 16h11M18 16h4" stroke="#fff" stroke-width="2.200" stroke-linecap="round"/></svg></a>
      <a href="#" class="run adobe id">Id</a>
      <a href="#" class="adobe ai">Ai</a>
      <a href="#" aria-label="Notes"><svg viewBox="0 0 26 26"><rect width="26" height="26" rx="6" fill="#f4f3ee"/><path d="M0 7V6a6 6 0 0 1 6-6h14a6 6 0 0 1 6 6v1z" fill="#fccb1a"/><path d="M0 13h26M0 19h26" stroke="#ddd"/></svg></a>
      <a href="#" class="adobe ps">Ps</a>
      <a href="#" class="run" aria-label="Acrobat"><svg viewBox="0 0 26 26"><rect width="26" height="26" rx="6" fill="#b30b00"/><path d="M6 20c3 0 8-9 7-14-1-3-3 0-1 4 2 5 5 8 8 8 3-1 0-4-6-3-4 0-8 3-8 5z" fill="none" stroke="#fff" stroke-width="1.600"/></svg></a>
      <a href="#" aria-label="Screenshot"><svg viewBox="0 0 26 26"><rect width="26" height="26" rx="6" fill="#f4f4f4"/><path d="M3 9V6a3 3 0 0 1 3-3h3M17 3h3a3 3 0 0 1 3 3v3M23 17v3a3 3 0 0 1-3 3h-3M9 23H6a3 3 0 0 1-3-3v-3" fill="none" stroke="#333" stroke-width="1.500"/><path d="M7 10h3l1-2h4l1 2h3v8H7z" fill="#444"/><circle cx="13" cy="13.500" r="2.300" fill="none" stroke="#eee"/></svg></a>
      <a href="#" aria-label="System Settings"><svg viewBox="0 0 26 26"><rect width="26" height="26" rx="6" fill="#b5bbbb"/><circle cx="13" cy="13" r="10.500" fill="#888" stroke="#333" stroke-width="1.800" stroke-dasharray="1.500 .6"/><circle cx="13" cy="13" r="8" fill="#aaa" stroke="#333" stroke-width="1.500"/><path d="M13 13H21M13 13L9 6M13 13L9 20" stroke="#333" stroke-width="1.800"/><circle cx="13" cy="13" r="3" fill="#777" stroke="#333"/></svg></a>
      <i class="sep"></i>
      <a href="#" aria-label="Brick"><svg viewBox="0 0 26 26"><rect width="26" height="26" rx="6" fill="#45406e"/><path d="M1 6h24M1 11h24M1 16h24M1 21h24M7 1v5M13 1v5M4 6v5M10 6v5M7 11v5M13 11v5M4 16v5M10 16v5M7 21v4M13 21v4" stroke="#8d8ab8"/><path d="M14 4h6l4 3v12l-4 3h-6V17h2V9h-2z" fill="#45406e" stroke="#fff" stroke-width="1.200"/></svg></a>
      <a href="#" class="run" aria-label="Word"><svg viewBox="0 0 26 26"><rect width="26" height="26" rx="6" fill="#fff"/><rect x="7" y="3" width="15" height="19" rx="3" fill="#3aa0f2"/><path d="M10 3h9a3 3 0 0 1 3 3v4H7V6a3 3 0 0 1 3-3z" fill="#4cd0f5"/><path d="M7 16h15v3a3 3 0 0 1-3 3H7z" fill="#2453d6"/><rect x="3" y="12" width="9" height="9" rx="2" fill="#153fa8"/><text class="w" x="7.500" y="19" text-anchor="middle">W</text></svg></a>
      <a href="#" class="fontbook" aria-label="Font Book"><span>A</span><b>A</b><b>A</b><i>a</i></a>
      <i class="sep"></i>
      <a href="#" aria-label="Documents"><svg viewBox="0 0 28 28"><path d="M1 3h9l2 3h15v8H1z" fill="#3a9fd0"/><path d="M5 2h7v6H5zM17 1h6v7h-6z" fill="#f4f4f4"/><path d="M12 1h4v7h-4z" fill="#555"/><path d="M0 7h28v18a2 2 0 0 1-2 2H2a2 2 0 0 1-2-2z" fill="#6cc6f5"/></svg></a>
      <a href="#" aria-label="Trash"><svg viewBox="0 0 26 28"><path d="M3 4h20l-3 22c-4 2-10 2-14 0z" fill="#f2f2f2" stroke="#ccc"/><path d="M8 12l3 8 3-10 3 11 3-9" fill="none" stroke="#ddd"/><ellipse cx="13" cy="4" rx="10" ry="3" fill="#999"/><path d="M5 4l3-2 3 3 4-4 3 3 3-1" fill="none" stroke="#fff" stroke-width="1.500"/><path d="M7 5l2-1M14 3l2 1" stroke="#c55"/></svg></a>
    </nav>
  </div>
</body>
</html>
```

FILE: styles.css
```css
* {
  box-sizing: border-box;
  margin: 0;
  padding: 0;
}
body {
  height: 100vh;
  display: flex;
  flex-direction: column;
  overflow: hidden;
  background-color: #1e3547;
  font-family: Lato, "Open Sans", sans-serif;
  font-size: 6px;
  color: #ddd;
}
a {
  color: inherit;
  text-decoration: none;
}
ul {
  list-style: none;
}
button, input, select {
  font: inherit;
  color: inherit;
  background: none;
  border: none;
  border-radius: 0;
  outline: none;
  appearance: none;
  min-width: 0;
}
svg {
  display: block;
  flex: none;
}
.sprite {
  width: 0;
  height: 0;
  position: absolute;
}

/* mac menu bar */
.menubar {
  height: 12px;
  flex: none;
  display: flex;
  align-items: center;
  background-color: #dcdcdc;
  color: #222;
  font-family: Inter, sans-serif;
  font-weight: 500;
  padding: 0 10px;
}
.apple {
  width: 7px;
  height: 8px;
  margin-right: 10px;
}
.menus {
  display: flex;
  gap: 11px;
}
.appname {
  font-weight: 700;
  margin-right: 2px;
}
.tray {
  margin-left: auto;
  display: flex;
  align-items: center;
  gap: 9px;
}
.tray svg {
  width: 8px;
  height: 8px;
}

/* application window */
.app {
  flex: 1;
  min-height: 0;
  display: flex;
  flex-direction: column;
  background-color: #535353;
  border-top: 1px solid #333;
}
.titlebar {
  height: 22px;
  flex: none;
  display: flex;
  align-items: center;
  position: relative;
  border-bottom: 1px solid #464646;
  padding: 0 9px 0 4px;
}
.lights {
  display: flex;
  gap: 4px;
  margin-bottom: 6px;
}
.lights i {
  width: 6px;
  height: 6px;
  border-radius: 50%;
  background-color: #ff5f57;
}
.lights i:nth-child(2) {
  background-color: #febc2e;
}
.lights i:nth-child(3) {
  background-color: #28c840;
}
.home {
  width: 9px;
  height: 9px;
  margin-left: 10px;
}
.titlebar h1 {
  position: absolute;
  top: 3px;
  left: 0;
  width: 86%;
  text-align: center;
  font: 500 6px/8px Inter, sans-serif;
  color: #ddd;
}
.account {
  margin-left: auto;
  display: flex;
  align-items: center;
  gap: 9px;
}
.share {
  width: 11px;
  height: 11px;
}
.user {
  display: flex;
  align-items: center;
  gap: 4px;
  font: 700 6px/8px "Open Sans", sans-serif;
  padding: 0 1px 0 3px;
}
.user svg {
  width: 5px;
  height: 5px;
}
.stock {
  display: flex;
  align-items: center;
  gap: 2px;
  width: 65px;
  height: 10px;
  border: 1px solid #666;
  background-color: #474747;
  padding-left: 2px;
  margin-right: -4px;
}
.stock svg {
  width: 9px;
  height: 7px;
}
.stock input {
  width: 50px;
}
.stock input::placeholder {
  color: #8a8a8a;
}
.avatar {
  width: 12px;
  height: 12px;
}

/* control bar */
.control {
  height: 28px;
  flex: none;
  display: flex;
  align-items: center;
  gap: 7px;
  padding: 0 4px 0 12px;
  font-weight: 700;
}
.proxy {
  width: 15px;
  height: 13px;
}
.pair {
  display: grid;
  grid-template-rows: 10px 10px;
  row-gap: 3px;
  align-items: center;
}
.w18 { width: 18px; }
.w43 { width: 43px; }
.w44 { width: 44px; }
.w49 { width: 49px; }
.w54 { width: 54px; }
.w106 { width: 106px; }
.cluster {
  display: flex;
  align-items: center;
  gap: 3px;
}
.field, .row {
  display: flex;
  align-items: center;
  height: 10px;
  gap: 2px;
  font-size: 5px;
  min-width: 0;
}
.field svg {
  width: 5px;
  height: 8px;
  color: #aaa;
}
.field .lead {
  width: 8px;
  height: 8px;
  margin-right: 1px;
}
.field input, .field select {
  flex: 1;
  height: 10px;
  background-color: #595959;
  padding-left: 2px;
}
.field select, .status select {
  background-image: url("data:image/svg+xml,%3Csvg xmlns='http://www.w3.org/2000/svg' viewBox='0 0 12 12'%3E%3Cpath d='M2 4l4 4 4-4' fill='none' stroke='%23ccc' stroke-width='2'/%3E%3C/svg%3E");
  background-size: 5px 5px;
  background-repeat: no-repeat;
  background-position: right 2px center;
}
.dim {
  color: #ddd;
}
.field.dim input {
  color: #999;
  font-weight: 400;
  font-size: 6px;
}
.box input, .box select {
  background-color: #474747;
}
.field .only {
  flex: none;
  width: 9px;
  margin-left: auto;
}
.line {
  width: 33px;
  height: 10px;
  background-color: #000;
  border: 3px solid #ddd;
}
.indent {
  padding-left: 11px;
}
.corner {
  width: 32px;
  height: 10px;
  background-color: #ddd;
  border: 1px solid #eee;
  border-top-color: #333;
  border-right: 2px solid #444;
}
.field .style {
  margin-left: 6px;
  color: #222;
  background-color: #e4e4e4;
  background-image: url("data:image/svg+xml,%3Csvg xmlns='http://www.w3.org/2000/svg' viewBox='0 0 18 20'%3E%3Cpath d='M0 0h18v20H0z' fill='%23474747'/%3E%3Cpath d='M6 8l3 3 3-3' fill='none' stroke='%23ccc' stroke-width='2'/%3E%3C/svg%3E");
  background-size: 9px 10px;
  background-position: right center;
}
.ic7, .field .ic7 {
  width: 7px;
  height: 7px;
}
.ic8, .field .ic8 {
  width: 8px;
  height: 8px;
}
.lock {
  width: 11px;
  height: 12px;
  background-color: #333;
  padding: 2px;
}
.lock svg {
  width: 7px;
  height: 8px;
}
.quad {
  display: grid;
  grid-template-columns: 9px 9px;
  grid-template-rows: 10px 10px;
  gap: 3px 5px;
  align-items: center;
}
.quad svg {
  width: 9px;
  height: 8px;
}
.quad .on {
  background-color: #333;
  height: 10px;
}
.faint {
  color: #888;
}
.pbox {
  width: 11px;
  height: 14px;
}
.swatch {
  width: 8px;
  height: 8px;
  background-color: #000;
}
.dot {
  border: 3px solid #000;
  background-color: #555;
}
.mini {
  width: 8px;
  height: 9px;
  background-color: #474747;
  padding: 1px;
}
.mini svg {
  width: 6px;
  height: 6px;
}
.spread3 {
  justify-content: space-between;
  padding: 0 3px 0 1px;
}
.spread3 em {
  font: italic 7px/8px "Liberation Serif", serif;
  color: #bbb;
}
.pct {
  width: 25px;
  height: 10px;
  background-color: #474747;
  padding-left: 2px;
}
.end {
  justify-content: flex-end;
  gap: 6px;
}
.ctlend {
  margin-left: auto;
  display: flex;
  align-items: center;
  gap: 8px;
}

/* work area */
.work {
  flex: 1;
  min-height: 0;
  display: flex;
  position: relative;
  border-top: 1px solid #3a3a3a;
}
.dockhead {
  height: 6px;
  flex: none;
  background-color: #404040;
  color: #bbb;
  font-size: 6px;
  line-height: 5px;
  text-align: right;
  padding: 0 3px;
}
.left {
  text-align: left;
}
.grip {
  width: 10px;
  height: 2px;
  margin: 1px auto;
  background-color: #434343;
  flex: none;
}
.tools {
  width: 22px;
  flex: none;
  background-color: #535353;
  border-right: 1px solid #383838;
  color: #c4c4c4;
}
.toolset {
  height: 232px;
  margin-top: 5px;
  display: flex;
  flex-direction: column;
  justify-content: space-between;
  align-items: center;
}
.toolset button {
  width: 14px;
  height: 12px;
  padding: 2px 3px;
}
.toolset svg {
  width: 8px;
  height: 8px;
}
.toolset .on {
  background-color: #383838;
}
.fillstroke {
  width: 16px;
  height: 36px;
  margin: 0 2px;
}
.last {
  height: 42px;
  margin-top: 2px;
}

.doc {
  flex: 1;
  min-width: 0;
  display: flex;
  flex-direction: column;
  background-color: #484848;
}
.tabs {
  height: 15px;
  flex: none;
  display: flex;
  background-color: #424242;
}
.tab {
  display: flex;
  align-items: center;
  gap: 5px;
  padding: 0 7px 0 6px;
  background-color: #535353;
  font: 700 5px/14px "Open Sans", sans-serif;
  color: #e0e0e0;
}
.tab button {
  font-size: 7px;
  font-weight: 400;
}
.hruler {
  height: 8px;
  flex: none;
  display: flex;
  background-color: #1b1b1b;
  color: #ddd;
  font: 700 5px/7px "Open Sans", sans-serif;
  margin-right: 9px;
  overflow: hidden;
}
.hruler .lead {
  width: 32px;
  border-left: 8px solid #303030;
}
.hruler span {
  flex: 1;
  padding-left: 1px;
  border-left: 1px solid #777;
  background: repeating-linear-gradient(90deg, transparent 0 6px, #555 6px 7px) bottom / 100% 2px no-repeat;
}
.hruler b {
  width: 3px;
  border-left: 1px solid #777;
}
.body {
  flex: 1;
  min-height: 0;
  display: flex;
}
.vruler {
  width: 8px;
  flex: none;
  display: flex;
  flex-direction: column;
  background-color: #1b1b1b;
  color: #ddd;
  font: 700 5px/5px "Open Sans", sans-serif;
  word-break: break-all;
}
.vruler .lead {
  height: 24px;
}
.vruler span {
  flex: 1;
  width: 8px;
  padding: 0 4px 0 1px;
  border-top: 1px solid #777;
  background: repeating-linear-gradient(180deg, transparent 0 6px, #555 6px 7px) right / 2px 100% no-repeat;
}
.vruler b {
  height: 6px;
  padding-left: 1px;
  border-top: 1px solid #777;
}
.canvas {
  flex: 1;
  min-width: 0;
  position: relative;
  overflow: hidden;
  background-color: #b9b9b9;
  margin-right: 9px;
}
.spread {
  display: flex;
  margin-left: 163px;
  width: 692px;
  box-shadow: 0 0 1px #555;
}
.page {
  flex: 1;
  min-width: 0;
  display: flex;
  background-color: #fff;
  color: #333;
}
.right {
  border-left: 1px solid #aaa;
}
.edge {
  width: 22px;
  flex: none;
  background-color: #f0e1de;
  display: flex;
  flex-direction: column;
  justify-content: flex-end;
  padding-bottom: 16px;
}
.section {
  width: 20px;
  height: 77px;
  background-color: #922f2f;
  color: #fff;
  font: 700 6px/18px "Liberation Serif", serif;
  text-align: center;
  writing-mode: vertical-rl;
  transform: rotate(180deg);
}
.content {
  flex: 1;
  min-width: 0;
  padding: 1px 29px 30px 6px;
}
.right .content {
  padding: 1px 6px 30px 29px;
}
.j {
  display: block;
  white-space: nowrap;
  text-align: justify;
  text-align-last: justify;
}
.summary {
  display: flex;
  gap: 17px;
  border: 1px solid #cc8585;
  padding: 2px 3px 2px 10px;
  font: 5px/7px "Liberation Serif", serif;
  color: #222;
}
.summary > div {
  flex: 1;
  min-width: 0;
}
.bul::before {
  content: "";
  float: left;
  width: 2px;
  height: 2px;
  margin: 3px 0 0 -6px;
  border-radius: 50%;
  background-color: #b33;
}
.faqhead {
  margin-top: 11px;
  height: 11px;
  background: linear-gradient(#e9efc3 0 8px, #fff 8px 9px, #e9efc3 9px);
  color: #189a7c;
  font: 800 6px/9px "Open Sans", sans-serif;
  letter-spacing: 1px;
  text-align: center;
}
.faq {
  height: 52px;
  margin-top: 3px;
  display: flex;
  flex-direction: column;
  justify-content: space-between;
  font: 6px/7px "Liberation Serif", serif;
  color: #222;
  white-space: nowrap;
}
.faq b {
  color: #1fa080;
  font-weight: 400;
}
.mcq {
  height: 211px;
  margin-top: 12px;
  display: flex;
  flex-direction: column;
  background: linear-gradient(90deg, #e4efd0, #fbfdf8 45%, #fff 55%, #d2e6f6);
  box-shadow: 1px 2px 3px #888;
  padding: 0 4px 2px 5px;
  font-size: 5px;
  line-height: 6px;
}
.mcq h2 {
  color: #2e2ea0;
  font-size: 7px;
  line-height: 17px;
  padding-bottom: 1px;
  text-align: center;
}
.cols {
  flex: 1;
  display: flex;
  gap: 18px;
}
.col {
  flex: 1;
  min-width: 0;
  display: flex;
  flex-direction: column;
  justify-content: space-between;
}
.loose {
  line-height: 1.3;
}
.q {
  display: flex;
  white-space: nowrap;
}
.q > b {
  width: 9px;
  flex: none;
  font-weight: 400;
}
.q > div {
  flex: 1;
  min-width: 0;
}
.q p + ul {
  margin-top: 1px;
}
.q li {
  display: flex;
}
.q i {
  width: 8px;
  font-style: normal;
}
.cont {
  height: 112px;
  margin-top: 0;
  padding: 4px 4px 3px 3px;
}
.answers {
  font-variant-numeric: proportional-nums;
}
.answers h3 {
  color: #2e2ea0;
  font-size: 6px;
  line-height: 8px;
  margin: 4px 0 3px;
}
.cursor {
  position: absolute;
  left: 623px;
  top: 168px;
  width: 8px;
  height: 11px;
}

/* status bar */
.status {
  height: 9px;
  flex: none;
  display: flex;
  align-items: center;
  gap: 4px;
  background-color: #484848;
  font-size: 5px;
  font-weight: 700;
  padding: 0 9px 0 6px;
}
.status button {
  width: 6px;
  height: 6px;
}
.status select {
  height: 7px;
}
.zoom {
  width: 28px;
}
.pageno {
  width: 44px;
  background-color: #3c3c3c;
  padding-left: 2px;
}
.status .ic8 {
  margin: 0 4px 0 5px;
}
.profile {
  width: 59px;
}
.err {
  width: 5px;
  height: 5px;
  border-radius: 50%;
  background-color: #e23434;
  margin-left: 2px;
}
.errors {
  width: 38px;
}
.scroll {
  flex: 1;
  margin-left: 76px;
  background-color: #454545;
}
.scroll div {
  width: 73%;
  height: 7px;
  border-radius: 4px;
  background-color: #656565;
}
.split {
  width: 9px;
  height: 7px;
}

/* docked panels */
.strip {
  width: 20px;
  flex: none;
  background-color: #535353;
  border-left: 1px solid #3a3a3a;
  border-right: 1px solid #3a3a3a;
}
.strip svg {
  width: 9px;
  height: 9px;
  margin: 4px auto;
}
.panels {
  width: 83px;
  flex: none;
  display: flex;
  flex-direction: column;
  border-left: 1px solid #3a3a3a;
}
.groups {
  flex: 1;
  display: flex;
  flex-direction: column;
  justify-content: space-between;
  padding-bottom: 29px;
}
.group {
  position: relative;
  border-bottom: 1px solid #404040;
  padding-top: 5px;
}
.group::before {
  content: "";
  position: absolute;
  left: 35px;
  top: 1px;
  width: 10px;
  height: 2px;
  background-color: #444;
}
.group button {
  width: 78px;
  height: 14px;
  margin-left: 2px;
  display: flex;
  align-items: center;
  gap: 5px;
  padding-left: 3px;
  font-weight: 900;
  white-space: nowrap;
  color: #e0e0e0;
}
.group .on {
  background: linear-gradient(#383838, #383838) center / 100% 11px no-repeat;
}
.group svg {
  width: 8px;
  height: 8px;
  color: #c8c8c8;
}
.group em {
  width: 8px;
  font: italic 8px/8px "Liberation Serif", serif;
}

/* floating scripts panel */
.scripts {
  position: absolute;
  right: 84px;
  top: 142px;
  bottom: 8px;
  width: 210px;
  display: flex;
  flex-direction: column;
  background-color: #535353;
  border: 1px solid #3a3a3a;
  box-shadow: 0 0 3px #555;
}
.ptabs {
  height: 15px;
  flex: none;
  display: flex;
  align-items: stretch;
  background-color: #434343;
  font-weight: 700;
  color: #bbb;
}
.ptabs button {
  flex: none;
  width: 15px;
  margin-right: 5px;
  overflow: hidden;
  white-space: nowrap;
  text-align: left;
}
.ptabs .on {
  width: 35px;
  margin-right: 6px;
  display: flex;
  align-items: center;
  gap: 2px;
  padding-left: 4px;
  font-weight: 900;
  color: #eee;
  background-color: #535353;
}
.ptabs .on svg {
  width: 3px;
  height: 5px;
}
.more {
  margin-left: auto;
  line-height: 14px;
  font-size: 7px;
  padding-right: 3px;
}
.bars {
  width: 8px;
  height: 5px;
  margin: 5px 3px 0 0;
  border: solid #999;
  border-width: 1px 0;
  background: linear-gradient(#999, #999) center / 100% 1px no-repeat;
}
.plist {
  flex: 1;
  min-height: 0;
  display: flex;
}
.plist ul {
  flex: 1;
}
.plist li {
  height: 11px;
  display: flex;
  align-items: center;
  gap: 3px;
  padding-left: 23px;
  font-size: 5px;
  font-weight: 900;
  color: #e4e4e4;
}
.plist svg {
  width: 7px;
  height: 7px;
  color: #bbb;
}
.plist .dir {
  padding-left: 4px;
}
.plist .tw {
  width: 5px;
  height: 5px;
  margin-right: 11px;
}
.plist .top .tw {
  margin-right: 0;
}
.vscroll {
  width: 6px;
  background-color: #4a4a4a;
  padding: 38px 0 0 1px;
}
.vscroll div {
  height: 247px;
  border-radius: 3px;
  background-color: #6c6c6c;
}
.pfoot {
  height: 17px;
  flex: none;
  border-bottom: 6px solid #484848;
}
.pfoot span {
  display: block;
  width: 6px;
  height: 6px;
  margin: 2px 11px 0 auto;
  border-radius: 50%;
  background-color: #ccc;
  color: #444;
  font: 700 5px/6px Lato, sans-serif;
  text-align: center;
}

/* desktop and dock */
.desktop {
  height: 42px;
  flex: none;
  position: relative;
  display: flex;
  justify-content: center;
  align-items: flex-start;
  background: linear-gradient(90deg, #1c3347, #2b4358 50%, #33506a);
}
.sea {
  position: absolute;
  left: 0;
  top: 0;
  width: 100%;
  height: 100%;
  opacity: 0.3;
}
.dock {
  position: relative;
  height: 39px;
  display: flex;
  align-items: center;
  gap: 8px;
  padding: 0 6px;
  border-radius: 10px;
  background-color: #dadada;
}
.dock a {
  position: relative;
  width: 26px;
  height: 26px;
  display: block;
}
.dock svg {
  width: 26px;
  height: 26px;
}
.run::after {
  content: "";
  position: absolute;
  left: 12px;
  bottom: -6px;
  width: 2px;
  height: 2px;
  border-radius: 50%;
  background-color: #333;
}
.dock .sep {
  width: 1px;
  height: 28px;
  margin: 0 3px;
  background-color: #bbb;
}
.dock .adobe {
  border-radius: 6px;
  font: 700 14px/26px "Open Sans", sans-serif;
  text-align: center;
}
.id {
  background-color: #49021f;
  color: #ff3366;
}
.ai {
  background-color: #330000;
  color: #ff9a00;
}
.ps {
  background-color: #001e36;
  color: #31a8ff;
}
.w {
  font: 700 7px Lato, sans-serif;
  fill: #fff;
}
.dock .cal {
  border-radius: 6px;
  background: linear-gradient(#f1564d 0 8px, #fafafa 8px);
  text-align: center;
  color: #333;
}
.cal b {
  display: block;
  font: 700 5px/8px Inter, sans-serif;
  color: #fff;
}
.cal span {
  display: block;
  font: 15px/18px Inter, sans-serif;
}
.dock .fontbook {
  display: grid;
  grid-template-columns: 8px 8px;
  grid-template-rows: 8px 8px;
  place-content: center;
  text-align: center;
  border-radius: 6px;
  background: linear-gradient(#b9cdd2, #7c7f7c);
  color: #333;
  font: 8px/8px "Liberation Serif", serif;
}
```
